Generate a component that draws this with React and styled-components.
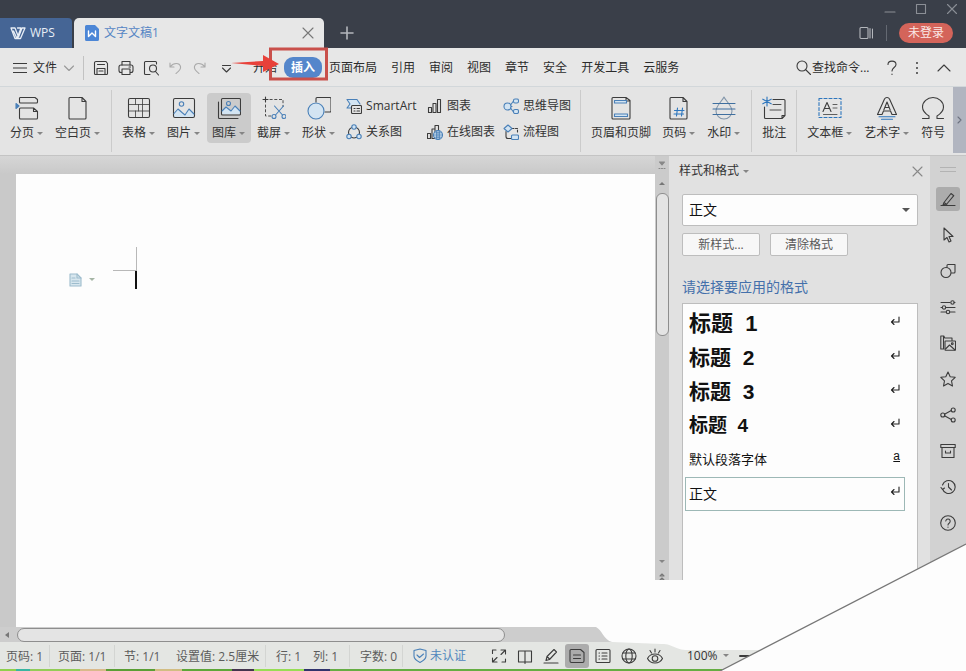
import React, { useState } from 'react';
import styled, { createGlobalStyle } from 'styled-components';

const DARK = '#3c3c3c';
const BLUE = '#4a80b8';
const SKY = '#d3e4f2';

const GlobalStyle = createGlobalStyle`
  * {
    box-sizing: border-box;
  }
  body {
    margin: 0;
    background: #fdfdfd;
    color: #333;
    font-family: 'Open Sans', 'Noto Sans CJK SC', sans-serif;
    font-size: 12px;
    line-height: 18px;
  }
  button, input, select {
    margin: 0;
    padding: 0;
    border: 0;
    background: none;
    color: inherit;
    font: inherit;
  }
  svg {
    display: block;
    flex: none;
  }
`;

const App = styled.div`
  position: relative;
  display: flex;
  flex-direction: column;
  height: 100vh;
  overflow: hidden;
`;

/* title bar */

const TitleBar = styled.header`
  display: flex;
  align-items: flex-end;
  height: 48px;
  flex: none;
  background: #3a3f49;
`;

const HomeTab = styled.button`
  display: flex;
  align-items: center;
  gap: 4px;
  width: 72px;
  height: 30px;
  padding-left: 10px;
  border-radius: 0 4px 0 0;
  background: #456595;
  color: #e8eef6;
`;

const DocTab = styled.div`
  display: flex;
  align-items: center;
  gap: 5px;
  width: 250px;
  height: 30px;
  margin-left: 2px;
  padding: 0 10px 0 11px;
  border-radius: 5px 5px 0 0;
  background: #e7e7e7;
  color: #5585c4;

  span {
    flex: 1;
  }
`;

const NewTab = styled.button`
  display: flex;
  align-items: center;
  height: 30px;
  margin-left: 16px;
`;

const TitleRight = styled.div`
  display: flex;
  flex-direction: column;
  margin-left: auto;
`;

const WindowButtons = styled.div`
  display: flex;
  align-items: center;
  justify-content: flex-end;
  gap: 19px;
  height: 18px;
  padding-right: 8px;
`;

const Account = styled.div`
  display: flex;
  align-items: center;
  height: 30px;
  padding-right: 13px;
`;

const AccountLine = styled.i`
  width: 1px;
  height: 16px;
  margin: 0 12px 0 13px;
  background: #646972;
`;

const Login = styled.button`
  width: 54px;
  height: 20px;
  border-radius: 10px;
  background: #d4645a;
  color: #fbe9e6;
`;

/* menu */

const MenuBar = styled.nav`
  display: flex;
  align-items: center;
  height: 39px;
  flex: none;
  padding: 1px 15px 0 13px;
  border-bottom: 1px solid #d2d7da;
  background: #e7e7e7;
  color: #2c2c2c;
`;

const FileButton = styled.button`
  display: flex;
  align-items: center;
  gap: 6px;
`;

const MenuLine = styled.i`
  width: 1px;
  height: 24px;
  margin: 0 9px 0 8px;
  background: #c2c2c2;
`;

const QuickTools = styled.div`
  display: flex;
  align-items: center;
  gap: 9px;
  margin-right: 13px;
`;

const MenuTabs = styled.div`
  display: flex;
  align-items: center;
  gap: 14px;
  white-space: nowrap;
`;

const ActiveTab = styled.div`
  position: relative;
  margin: 0 -7px;

  button {
    position: relative;
    width: 38px;
    height: 21px;
    border-radius: 9px;
    background: #5486cb;
    color: #fff;
    font-weight: 600;
  }
`;

const Marker = styled.svg`
  position: absolute;
  right: -7px;
  top: -10px;
  z-index: 2;
  pointer-events: none;
`;

const MenuRight = styled.div`
  display: flex;
  align-items: center;
  margin-left: auto;
  gap: 14px;
`;

const Search = styled.label`
  display: flex;
  align-items: center;
  gap: 1px;

  input {
    width: 61px;
    outline: none;
  }
  input::placeholder {
    color: #2c2c2c;
    opacity: 1;
  }
`;

/* ribbon */

const Ribbon = styled.section`
  display: flex;
  gap: 1px;
  height: 69px;
  flex: none;
  padding-left: 5px;
  border-bottom: 1px solid #c4c4c4;
  background: #e4e4e4;
  overflow: hidden;
`;

const BigButton = styled.button`
  display: flex;
  flex-direction: column;
  align-items: center;
  flex: none;
  height: 50px;
  gap: 4px;
  margin-top: 6px;
  padding: 3px ${p => (p.$menu ? 6 : 5)}px 0 5px;
  border-radius: 4px;
  background: ${p => (p.$active ? '#cbcbcb' : 'none')};
  white-space: nowrap;

  span {
    display: flex;
    align-items: center;
    gap: 3px;
  }
`;

const RibbonLine = styled.i`
  flex: none;
  width: 1px;
  height: 62px;
  margin: 3px 4px 0;
  background: #cbcbcb;
`;

const SmallGrid = styled.div`
  display: grid;
  grid-template-columns: 81px 76px 72px;
  grid-auto-rows: 18px;
  row-gap: 8px;
  flex: none;
  padding: 10px 0 0 4px;
`;

const SmallButton = styled.button`
  display: flex;
  align-items: center;
  gap: 4px;
  white-space: nowrap;
`;

const RibbonScroll = styled.button`
  display: flex;
  align-items: center;
  justify-content: center;
  flex: none;
  width: 13px;
  height: 66px;
  margin-left: auto;
  background: #b1b5c0;
`;

const Caret = styled.i`
  width: 0;
  height: 0;
  border: 3px solid transparent;
  border-bottom: 0;
  border-top-color: ${p => p.$color || '#858585'};
`;

const CaretUp = styled(Caret)`
  border-top: 0;
  border-bottom: 3px solid #777;
`;

const CaretLeft = styled(Caret)`
  border: 3px solid transparent;
  border-left: 0;
  border-right: 4px solid #777;
`;

/* document */

const Workspace = styled.main`
  display: flex;
  flex: 1;
  min-height: 0;
`;

const DocArea = styled.div`
  display: flex;
  flex-direction: column;
  flex: 1;
  min-width: 0;
  background: #cdcdcd;
`;

const DocRow = styled.div`
  display: flex;
  flex: 1;
  min-height: 0;
`;

const Desk = styled.div`
  flex: 1;
  display: flex;
  padding: 18px 0 0 16px;
  background: linear-gradient(#d6d6d6, #c9c9c9 18px);
`;

const Page = styled.div`
  display: grid;
  grid-template-columns: 44px 24px;
  grid-template-rows: 24px 20px;
  flex: 1;
  padding: 73px 0 0 53px;
  background: #fdfdfd;
`;

const Corner = styled.i`
  grid-column: 2;
  border: solid #b8b8b8;
  border-width: 0 1px 1px 0;
`;

const PageTool = styled.button`
  display: flex;
  align-items: center;
  align-self: start;
  gap: 7px;
  height: 17px;
`;

const Cursor = styled.i`
  justify-self: end;
  width: 2px;
  height: 18px;
  background: #111;
`;

const VScroll = styled.div`
  display: flex;
  flex-direction: column;
  align-items: center;
  width: 14px;
  padding: 5px 0 46px;
  background: #cbcbcb;
`;

const VThumb = styled.div`
  width: 13px;
  height: 143px;
  margin: 8px 0 auto;
  border: 1px solid #8e8e8e;
  border-radius: 6px;
  background: #e4e4e4;
`;

const ScrollStack = styled.div`
  display: flex;
  flex-direction: column;
  align-items: center;
  gap: ${p => p.$gap}px;
`;

const HScroll = styled.div`
  display: flex;
  align-items: center;
  gap: 8px;
  height: 15px;
  flex: none;
  padding-left: 5px;
`;

const HThumb = styled.div`
  width: 488px;
  height: 14px;
  border: 1px solid #8e8e8e;
  border-radius: 7px;
  background: #e4e4e4;
`;

/* style pane */

const Panel = styled.aside`
  display: flex;
  flex-direction: column;
  width: 261px;
  flex: none;
  padding: 0 12px 0 13px;
  background: #e1e1e1;
`;

const PanelHead = styled.div`
  display: flex;
  align-items: center;
  justify-content: space-between;
  height: 30px;
  margin: 0 -5px 8px -3px;

  button {
    display: flex;
    align-items: center;
    gap: 4px;
  }
`;

const SelectBox = styled.div`
  display: grid;
  align-items: center;

  > * {
    grid-area: 1 / 1;
  }
  > i {
    justify-self: end;
    margin-right: 8px;
    border-width: 4px 4px 0;
    pointer-events: none;
  }
`;

const StyleSelect = styled.select`
  appearance: none;
  width: 100%;
  height: 32px;
  padding: 0 6px;
  border: 1px solid #bdbdbd;
  border-radius: 2px;
  background: #fdfdfd;
  color: #111;
  font-size: 14px;
`;

const PanelButtons = styled.div`
  display: flex;
  gap: 10px;
  margin-top: 7px;

  button {
    width: 78px;
    height: 23px;
    border: 1px solid #bdbdbd;
    border-radius: 2px;
    background: #f7f7f7;
    color: #5a5a5a;
  }
`;

const PanelTitle = styled.h2`
  margin: 21px 0 6px;
  color: #4470ab;
  font-size: 14px;
  font-weight: 400;
  line-height: 20px;
`;

const StyleList = styled.div`
  flex: 1;
  padding: 3px 12px 0 2px;
  border: 1px solid #bdbdbd;
  background: #fdfdfd;
`;

const StyleItem = styled.button`
  display: flex;
  align-items: center;
  justify-content: space-between;
  width: 100%;
  height: 34px;
  padding: 0 4px 0 3px;
  border: 1px solid ${p => (p.$selected ? '#9db8b6' : 'transparent')};
  color: #111;
  font-family: 'Liberation Sans', 'Noto Sans CJK SC', sans-serif;
  font-size: ${p => p.$size}px;
  font-weight: ${p => (p.$bold ? 700 : 400)};
  line-height: 32px;
  white-space: pre;

  svg {
    margin-bottom: 8px;
  }
  u {
    margin-bottom: 8px;
    font-size: 12px;
    line-height: 18px;
  }
`;

const Rail = styled.aside`
  display: flex;
  flex-direction: column;
  align-items: center;
  gap: 12px;
  width: 36px;
  flex: none;
  padding-top: 11px;
  background: #d2d2d2;
`;

const Grip = styled.i`
  width: 16px;
  height: 5px;
  margin-bottom: 3px;
  border: solid #b3b3b3;
  border-width: 1px 0;
`;

const RailButton = styled.button`
  display: flex;
  align-items: center;
  justify-content: center;
  width: 24px;
  height: 24px;
  border-radius: 3px;
  background: ${p => (p.$active ? '#acacac' : 'none')};
`;

/* status bar */

const StatusBar = styled.footer`
  display: flex;
  align-items: center;
  height: 27px;
  flex: none;
  background: #e4e6e3;
  color: #5c5c5c;
  white-space: nowrap;
`;

const StatusText = styled.span`
  width: ${p => p.$width}px;
  height: 22px;
  line-height: 24px;
  padding-left: ${p => p.$pad}px;
  border-right: 1px solid ${p => (p.$line ? '#d3d5d2' : 'transparent')};
`;

const Verify = styled.button`
  display: flex;
  align-items: center;
  gap: 3px;
  width: 74px;
  margin-left: 10px;
  color: #5087bd;
`;

const ViewButtons = styled.div`
  display: flex;
  gap: 2px;
`;

const Zoom = styled.button`
  display: flex;
  align-items: center;
  gap: 5px;
  margin: 0 10px 0 20px;
  color: #333;
`;

const Strip = styled.div`
  height: 2px;
  flex: none;
  background: linear-gradient(90deg, #8fd04c 0 16px, #38b5a2 16px 30px, #93cc57 30px 80px, #d9b98b 80px 106px, #5a9e35 106px 155px, #d2bd83 155px 182px, #5da638 182px 232px, #44344e 232px 254px, #97dd55 254px 304px, #30336c 304px 330px, #65ad43 330px);
`;

const Fold = styled.svg`
  position: absolute;
  right: 0;
  bottom: 0;
  pointer-events: none;
`;

function Icon({ w = 16, h = w, color = DARK, sw = 1.1, children }) {
  return (
    <svg width={w} height={h} viewBox={`0 0 ${w} ${h}`} fill="none"
      stroke={color} strokeWidth={sw} strokeLinecap="round" strokeLinejoin="round" aria-hidden="true">
      {children}
    </svg>
  );
}

const bigIcons = {
  breaks: <><path d="M4.500 2v4a1 1 0 0 0 1 1h16a1 1 0 0 0 1-1V3.500l-2.500-2H5.500a1 1 0 0 0-1 .5zM4.500 13v9a1 1 0 0 0 1 1h16a1 1 0 0 0 1-1v-6.500l-4-3.500h-13a1 1 0 0 0-1 1zM18.500 12v3.500h4" /><path d="M1 7.500l3 2.500-3 2.500z" fill={BLUE} stroke={BLUE} /></>,
  blank: <path d="M4 1.500h12l4 4V22a1 1 0 0 1-1 1H4a1 1 0 0 1-1-1V2.500a1 1 0 0 1 1-1zM16 1.500v4h4" />,
  table: <><rect x="1.500" y="2.500" width="21" height="19" rx="1.500" /><path d="M2 8.500h20M2 15h20M8.500 3v5.500M15.500 3v5.500M8.500 15v6M15.500 8.500V21M11.500 8.500V15" strokeWidth=".8" /></>,
  picture: <><path d="M2 17.500l4-4.500 4 3.500 3 2.500 4-6 5 5v3H2z" fill={SKY} stroke="none" /><rect x="1.500" y="2.500" width="21" height="19" rx="1.500" /><circle cx="9.500" cy="8" r="2.200" stroke={BLUE} /><path d="M2 17.500l4-4.500 4 3.500 3 2.500 4-6 5 5" stroke={BLUE} /></>,
  gallery: <><path d="M5 15l4-4.500 5 4.500 4-5 5 5v3.500H5z" fill={SKY} stroke="none" /><rect x="4.500" y="2.500" width="19" height="16.500" rx="1" /><path d="M1.500 6v15.500a1 1 0 0 0 1 1H21" /><circle cx="11.500" cy="7.500" r="2" stroke={BLUE} /><path d="M5 15l4-4 5 4 4-5 5 5" stroke={BLUE} /></>,
  shot: <><path d="M1 3.500h5M3.500 1v5" /><path d="M8 3.500h13v7M3.500 9v11h6" strokeDasharray="2.200 2.500" strokeWidth=".9" /><g stroke={BLUE}><path d="M12.500 10l8 9M21.500 10l-8 9" /><circle cx="12" cy="20.500" r="2" /><circle cx="22" cy="20.500" r="2" /></g></>,
  shapes: <><path d="M9 6V2.500a1 1 0 0 1 1-1h13a1 1 0 0 1 1 1V15a1 1 0 0 1-1 1h-5" /><circle cx="9" cy="15" r="8" stroke={BLUE} fill={SKY} /></>,
  header: <><path d="M4 1.500h13l4 3V22a1 1 0 0 1-1 1H4a1 1 0 0 1-1-1V2.500a1 1 0 0 1 1-1zM17 1.500V5h4" /><path d="M5.500 4.500h12V7h-12zM5.500 18h13v2.500h-13z" stroke={BLUE} fill={SKY} /></>,
  pagenum: <><path d="M4 1.500h12l4 4V22a1 1 0 0 1-1 1H4a1 1 0 0 1-1-1V2.500a1 1 0 0 1 1-1zM16 1.500v4h4" /><path d="M10.500 12l-1 8M15.500 12l-1 8M7.500 14.500H17M7 18h9.500" stroke="#2d76bd" /></>,
  water: <><path d="M12 1c-2 4-8 9-8 14a8 8 0 0 0 16 0c0-5-6-10-8-14z" stroke="#8296aa" /><path d="M1 7.500h22M1 13h22M1 18.500h22" stroke="#3f6f9f" /></>,
  comment: <><path d="M2.500 11v10.500a1 1 0 0 0 1 1H20l3-3V4.500a1 1 0 0 0-1-1H11M20 22.500v-3h3" /><path d="M11 8.500h8M8 14h11" strokeWidth=".9" /><path d="M5 1v9M.8 3.200l8.400 4.600M9.200 3.200L.8 7.800" stroke="#2d76bd" /></>,
  textbox: <><rect x="1" y="2.500" width="22" height="19" stroke="#2d76bd" strokeDasharray="3 2" /><path d="M5 15.500L9 6.500l4 9M6.500 12.500h5" /><path d="M15 8.500h4M15 12h4M5.500 18.500H19" strokeWidth=".8" /></>,
  art: <><path d="M2.500 18.500l7-15.500c1-2 4-2 5 0l7 15.500h-4.500L15.500 15h-7L7 18.500z" /><path d="M8.800 14L12 6l3.200 8M10 11.500h4" /><path d="M4 20.800h16M6.500 23.200h11" stroke="#2d76bd" /></>,
  omega: <path d="M1.500 22.500H8V20C4 17.500 1.500 14.500 1.500 11a10.500 9.500 0 0 1 21 0c0 3.500-2.500 6.500-6.500 9v2.500h6.500" />,
};

const smallIcons = {
  smartart: <><path d="M6 10H1l3-4-3-4.500h10L14 6" stroke={BLUE} fill={SKY} /><rect x="5.500" y="7.500" width="10" height="8" rx="1" fill="#e4e4e4" /><path d="M8 10.500h1M11 10.500h2.500M8 13h1M11 13h2.500" /></>,
  relation: <><circle cx="8" cy="8.500" r="5.500" /><g stroke={BLUE} fill={SKY}><circle cx="8" cy="3" r="2.200" /><circle cx="3" cy="12.500" r="2.200" /><circle cx="13" cy="12.500" r="2.200" /></g></>,
  chart: <path d="M1.500 9.500h3v5h-3zM6 5.500h3v9H6zM10.500 1.500h3v13h-3z" />,
  online: <><path d="M.5 9.500h3v5h-3zM5 5h3v9.500H5zM8 6V1.500h3.500V7" /><circle cx="11" cy="11" r="4.500" stroke={BLUE} fill={SKY} /><path d="M6.500 11h9M11 6.500v9M7.500 8.800h7M7.500 13.200h7M9.500 7v8M12.500 7v8" stroke={BLUE} strokeWidth=".8" /></>,
  mind: <><path d="M7.500 7l3-4M7.500 10l3 4M8 8.500h1" stroke={BLUE} /><g stroke={BLUE} fill={SKY}><circle cx="4.500" cy="8.500" r="3.500" /><rect x="10.500" y="1" width="5" height="4" rx="1.500" /><rect x="10.500" y="11.500" width="5" height="4" rx="1.500" /></g></>,
  flow: <><path d="M3 7.500v5a2 2 0 0 0 2 2h3" /><path d="M9 4.500h5.500V9" strokeDasharray="2 1.500" /><g stroke={BLUE} fill={SKY}><path d="M5 1l4 3.500L5 8 1 4.500z" /><rect x="8.500" y="11" width="7" height="4.500" rx="1" /></g></>,
};

const quickIcons = [
  ['保存', <><path d="M3 1.500h10l1.500 2v10a1 1 0 0 1-1 1h-11a1 1 0 0 1-1-1V3a1.500 1.500 0 0 1 1.500-1.500z" /><path d="M4.500 4.500h7M4 14.500v-6h8v6M6 11h4" /></>],
  ['打印', <><path d="M4 5V1.500h8V5" /><rect x="1" y="5" width="14" height="7.500" rx="2" /><path d="M4 9h8v5.500H4z" fill="#e7e7e7" /><path d="M11 7h1.500" /></>],
  ['打印预览', <><path d="M7 14.500H2.500a1 1 0 0 1-1-1v-11a1 1 0 0 1 1-1h10a1 1 0 0 1 1 1V4" /><circle cx="10" cy="8.500" r="3.500" /><path d="M12.500 11.500l3 3.500" /></>],
];

const railIcons = [
  <><path d="M1 14.500h14" /><path d="M4 11.500l7-9 2.800 2.200-7 8.300-3.800 1zM4 11.500l2.800 2" /></>,
  <path d="M4 1v12l3-2.500 2 4.500 2-1-2-4.500h4z" />,
  <><path d="M7 4.500V2.500a1 1 0 0 1 1-1h7v7.500a1 1 0 0 1-1 1h-2.500" /><circle cx="6" cy="9.500" r="5" /></>,
  <><path d="M1 3.500h9M14 3.500h1M1 8.500h1M6 8.500h9M1 13h5M10 13h5" /><circle cx="12.500" cy="3.500" r="1.700" /><circle cx="4" cy="8.500" r="1.700" /><circle cx="8" cy="13" r="1.700" /></>,
  <><path d="M3.500 14H.8V1h3l1 2H12v2.500M3.500 14V1" /><rect x="5" y="6" width="10.500" height="9.200" rx=".5" /><path d="M5.500 14l4-4 5.500 5" /><circle cx="12.300" cy="8.800" r=".9" /></>,
  <path d="M8 1l2.200 4.700 5 .6-3.700 3.500 1 5.200L8 12.400 3.500 15l1-5.200L.8 6.300l5-.6z" />,
  <><path d="M4.500 7.200l6.800-3.700M4.500 8.800l6.800 3.700" /><circle cx="2.800" cy="8" r="2" /><circle cx="13.200" cy="3" r="2" /><circle cx="13.200" cy="13" r="2" /></>,
  <><rect x=".8" y="1.500" width="14.400" height="3" /><path d="M2 4.500v10h12v-10M5.500 8v2h5V8" /></>,
  <><path d="M2.500 10a6.500 6.500 0 1 0 0-4M1 8.500l1.500 2 2-1.500" /><path d="M8.500 4.500V8l3 3" /></>,
  <><circle cx="8" cy="8" r="7.300" /><path d="M5.800 6a2.200 2.200 0 1 1 3.500 2C8.300 8.700 8 9 8 10M8 12v.2" /></>,
];

const viewIcons = [
  <path d="M10 2h4.500v4M14 2.500l-4 4M6 14H1.500v-4M2 13.500l4-4M1.500 5.500V2H5M14.500 11v3H11" />,
  <path d="M8 3H1.500v11H8zM8 3h6.500v11H8M8 14.500v1" />,
  <><path d="M1 15h14" /><path d="M3 12.500l1-4 7-7 2.500 2.500-7 7.500zM4 8.500l2.500 2.500" /></>,
  <path d="M2 1.500h9.500L15 4.500V13a1.500 1.500 0 0 1-1.500 1.500h-11A1.500 1.500 0 0 1 1 13V2.500a1 1 0 0 1 1-1zM4.500 7h7M4.500 10.500h7" />,
  <><rect x="1" y="1.500" width="14" height="13" rx="1" /><path d="M4 5h.5M7 5h5M4 8h.5M7 8h5M4 11h.5M7 11h5" /></>,
  <><circle cx="8" cy="8" r="7" /><ellipse cx="8" cy="8" rx="3.200" ry="7" /><path d="M2 5h12M2 11h12" /></>,
  <><path d="M.5 10.500c3-6 12-6 15 0-3 6-12 6-15 0z" /><circle cx="8" cy="10.500" r="2.800" /><path d="M8 1v3M3 2.500L4.500 5M13 2.500L11.500 5" /></>,
];
const viewNames = ['全屏', '阅读版式', '写作模式', '页面视图', '大纲', 'Web版式', '护眼模式'];
const railNames = ['样式和格式', '选择', '形状', '属性', '图片', '收藏', '分享', '备份', '历史', '帮助'];

const ribbon = [
  ['breaks', '分页', true], ['blank', '空白页', true], null,
  ['table', '表格', true], ['picture', '图片', true], ['gallery', '图库', true], ['shot', '截屏', true], ['shapes', '形状', true],
];
const ribbonRight = [
  null, ['header', '页眉和页脚'], ['pagenum', '页码', true], ['water', '水印', true], null,
  ['comment', '批注'], null, ['textbox', '文本框', true], ['art', '艺术字', true], ['omega', '符号'],
];
const small = [
  ['smartart', 'SmartArt'], ['chart', '图表'], ['mind', '思维导图'],
  ['relation', '关系图'], ['online', '在线图表'], ['flow', '流程图'],
];
const tabs = ['页面布局', '引用', '审阅', '视图', '章节', '安全', '开发工具', '云服务'];
const styles = [
  { name: '标题  1', size: 22, bold: true },
  { name: '标题  2', size: 21, bold: true },
  { name: '标题  3', size: 21, bold: true },
  { name: '标题  4', size: 19, bold: true },
  { name: '默认段落字体', size: 13, char: true },
  { name: '正文', size: 14 },
];
const status = [
  ['页码: 1', 50, 6, true], ['页面: 1/1', 65, 8, true], ['节: 1/1', 53, 9], ['设置值: 2.5厘米', 98, 8, true],
  ['行: 1', 38, 10], ['列: 1', 46, 9, true], ['字数: 0', 53, 10, true],
];

function BigItems({ items }) {
  return items.map((item, i) => {
    if (!item) return <RibbonLine key={i} />;
    const [icon, label, menu] = item;
    return (
      <BigButton key={icon} $menu={menu} $active={icon === 'gallery'}>
        <Icon w={24}>{bigIcons[icon]}</Icon>
        <span>{label}{menu && <Caret />}</span>
      </BigButton>
    );
  });
}

export default function Writer() {
  const [selected, setSelected] = useState('正文');

  return (
    <App>
      <GlobalStyle />
      <TitleBar>
        <HomeTab>
          <Icon w={16} h={14} color="#e8eef6" sw={1.3}>
            <path d="M1 2h4l3.500 9L12 2h3l-4.500 10.500H7L3.500 5M1 2l4 10.500h2L11 2H7.500" />
          </Icon>
          WPS
        </HomeTab>
        <DocTab>
          <Icon w={14} h={16} color="#fff" sw={1.4}>
            <path d="M1.500 0H10l4 4v10.500a1.500 1.500 0 0 1-1.500 1.500h-11A1.500 1.500 0 0 1 0 14.500v-13A1.500 1.500 0 0 1 1.500 0z" fill="#4c86d6" stroke="none" />
            <path d="M3.500 6v5.500L7 8l3.500 3.500V6" />
          </Icon>
          <span>文字文稿1</span>
          <button aria-label="关闭标签"><Icon w={12} color="#777"><path d="M1 1l10 10M11 1L1 11" /></Icon></button>
        </DocTab>
        <NewTab aria-label="新建标签"><Icon w={14} color="#b4b7bc" sw={1.6}><path d="M1 7h12M7 1v12" /></Icon></NewTab>
        <TitleRight>
          <WindowButtons>
            <button aria-label="最小化"><Icon w={12} color="#8b8f96"><path d="M1 9h10" /></Icon></button>
            <button aria-label="最大化"><Icon w={12} color="#8b8f96"><rect x="1.500" y="1.500" width="9" height="9" /></Icon></button>
            <button aria-label="关闭"><Icon w={12} color="#8b8f96"><path d="M1.500 1.500l9 9M10.500 1.500l-9 9" /></Icon></button>
          </WindowButtons>
          <Account>
            <button aria-label="阅读"><Icon w={14} color="#b4b7bc"><rect x="1" y="1.500" width="8" height="11" rx="1" /><path d="M11 2.500v9.500M13.500 3v9" /></Icon></button>
            <AccountLine />
            <Login>未登录</Login>
          </Account>
        </TitleRight>
      </TitleBar>

      <MenuBar>
        <FileButton>
          <Icon w={14} h={12}><path d="M0 1.500h14M0 6h14M0 10.500h14" /></Icon>
          文件
          <Icon w={12} h={8} color="#999"><path d="M1.500 2l4.500 4.500L10.500 2" /></Icon>
        </FileButton>
        <MenuLine />
        <QuickTools>
          {quickIcons.map(([name, icon]) => (
            <button key={name} aria-label={name}><Icon>{icon}</Icon></button>
          ))}
          <button aria-label="撤销"><Icon w={15} color="#aaa"><path d="M2 3v4h4M2.500 6.500c3-4 9-4 10 0 .8 3-2 5-4.500 7" /></Icon></button>
          <button aria-label="恢复"><Icon w={15} color="#aaa"><path d="M13 3v4H9M12.500 6.500c-3-4-9-4-10 0-.8 3 2 5 4.500 7" /></Icon></button>
          <button aria-label="更多"><Icon w={24} h={12}><path d="M6.500 3.500h8M6.500 6l4 4 4-4" /></Icon></button>
        </QuickTools>
        <MenuTabs>
          <button>开始</button>
          <ActiveTab>
            <button>插入</button>
            <Marker width="98" height="35" viewBox="0 0 98 35" fill="none">
              <rect x="39.500" y="2" width="56" height="30" stroke="#c9504b" strokeWidth="3" />
              <path d="M0 16l32-2V8l16 9-16 8v-6z" fill="#e8413a" />
            </Marker>
          </ActiveTab>
          {tabs.map(tab => <button key={tab}>{tab}</button>)}
        </MenuTabs>
        <MenuRight>
          <Search>
            <Icon w={15}><circle cx="6" cy="6" r="5" /><path d="M9.500 9.500l5 5" /></Icon>
            <input aria-label="查找命令" placeholder="查找命令..." />
          </Search>
          <button aria-label="帮助"><Icon w={10} h={16}><path d="M1 4.500C1 0 9 0 9 4.500 9 7.500 5 7.500 5 11M5 14v.5" /></Icon></button>
          <button aria-label="选项"><Icon w={12} h={16} sw={2}><path d="M6 3v.1M6 8v.1M6 13v.1" /></Icon></button>
          <button aria-label="折叠功能区"><Icon w={14} h={10}><path d="M1 8l6-6 6 6" /></Icon></button>
        </MenuRight>
      </MenuBar>

      <Ribbon>
        <BigItems items={ribbon} />
        <SmallGrid>
          {small.map(([icon, label]) => (
            <SmallButton key={icon}><Icon>{smallIcons[icon]}</Icon>{label}</SmallButton>
          ))}
        </SmallGrid>
        <BigItems items={ribbonRight} />
        <RibbonScroll aria-label="向右滚动"><Icon w={5} h={8} color="#6d7280"><path d="M1 1l3 3-3 3" /></Icon></RibbonScroll>
      </Ribbon>

      <Workspace>
        <DocArea>
          <DocRow>
            <Desk>
              <Page>
                <Corner />
                <PageTool aria-label="段落布局">
                  <Icon w={13} h={14} color="#9dbccd"><path d="M1 1h7l4 4v8H1z" fill="#d7e6ee" /><path d="M8 1v4h4M3 5h3M3 8h7M3 10.500h7" /></Icon>
                  <Caret $color="#a5b5a5" />
                </PageTool>
                <Cursor />
              </Page>
            </Desk>
            <VScroll>
              <ScrollStack $gap={12}>
                <Icon w={8} h={9} color="#888"><path d="M1.500 1h5L4 4zM1 7.500h1M3.500 7.500h1M6 7.500h1" fill="#888" /></Icon>
                <CaretUp />
              </ScrollStack>
              <VThumb />
              <ScrollStack $gap={10}>
                <Caret />
                <Icon w={8} h={8} color="#777"><path d="M2 3l2-2 2 2zM2 7l2-2 2 2z" /></Icon>
              </ScrollStack>
            </VScroll>
          </DocRow>
          <HScroll>
            <CaretLeft />
            <HThumb />
          </HScroll>
        </DocArea>

        <Panel>
          <PanelHead>
            <button>样式和格式<Caret /></button>
            <button aria-label="关闭窗格"><Icon w={11} color="#888"><path d="M1 1l9 9M10 1l-9 9" /></Icon></button>
          </PanelHead>
          <SelectBox>
            <StyleSelect aria-label="样式" value={selected} onChange={e => setSelected(e.target.value)}>
              {styles.map(s => <option key={s.name} value={s.name}>{s.name}</option>)}
            </StyleSelect>
            <Caret $color="#555" />
          </SelectBox>
          <PanelButtons>
            <button>新样式...</button>
            <button>清除格式</button>
          </PanelButtons>
          <PanelTitle>请选择要应用的格式</PanelTitle>
          <StyleList>
            {styles.map(s => (
              <StyleItem key={s.name} $size={s.size} $bold={s.bold} $selected={s.name === selected} onClick={() => setSelected(s.name)}>
                {s.name}
                {s.char ? <u>a</u> : (
                  <Icon w={10} h={9} color="#222"><path d="M9 1v5H1.500M4 3.500L1.500 6 4 8.500" /></Icon>
                )}
              </StyleItem>
            ))}
          </StyleList>
        </Panel>

        <Rail>
          <Grip />
          {railIcons.map((icon, i) => (
            <RailButton key={railNames[i]} $active={i === 0} aria-label={railNames[i]}><Icon>{icon}</Icon></RailButton>
          ))}
        </Rail>
      </Workspace>

      <StatusBar>
        {status.map(([text, width, pad, line]) => (
          <StatusText key={text} $width={width} $pad={pad} $line={line}>{text}</StatusText>
        ))}
        <Verify>
          <Icon w={14} h={15} color={BLUE}><path d="M7 1l6 1.500V8c0 3-3 5-6 6.500C4 13 1 11 1 8V2.500zM4 7l2.500 2.500L10.500 6" /></Icon>
          未认证
        </Verify>
        <ViewButtons>
          {viewIcons.map((icon, i) => (
            <RailButton key={viewNames[i]} $active={i === 3} aria-label={viewNames[i]}><Icon>{icon}</Icon></RailButton>
          ))}
        </ViewButtons>
        <Zoom>100%<Caret /></Zoom>
        <button aria-label="缩小"><Icon w={12} sw={2}><path d="M1 6h10" /></Icon></button>
      </StatusBar>
      <Strip />

      <Fold width="370" height="130" viewBox="0 0 370 130">
        <path d="M0 86H59V39H321V28L370 3V130H124L165 109H92C78 109 78 103 66 103L16 101C8 99 6 89 0 86z" fill="#fdfdfd" />
        <path d="M370 3L124 130" stroke="#777" strokeWidth="1.300" />
      </Fold>
    </App>
  );
}
